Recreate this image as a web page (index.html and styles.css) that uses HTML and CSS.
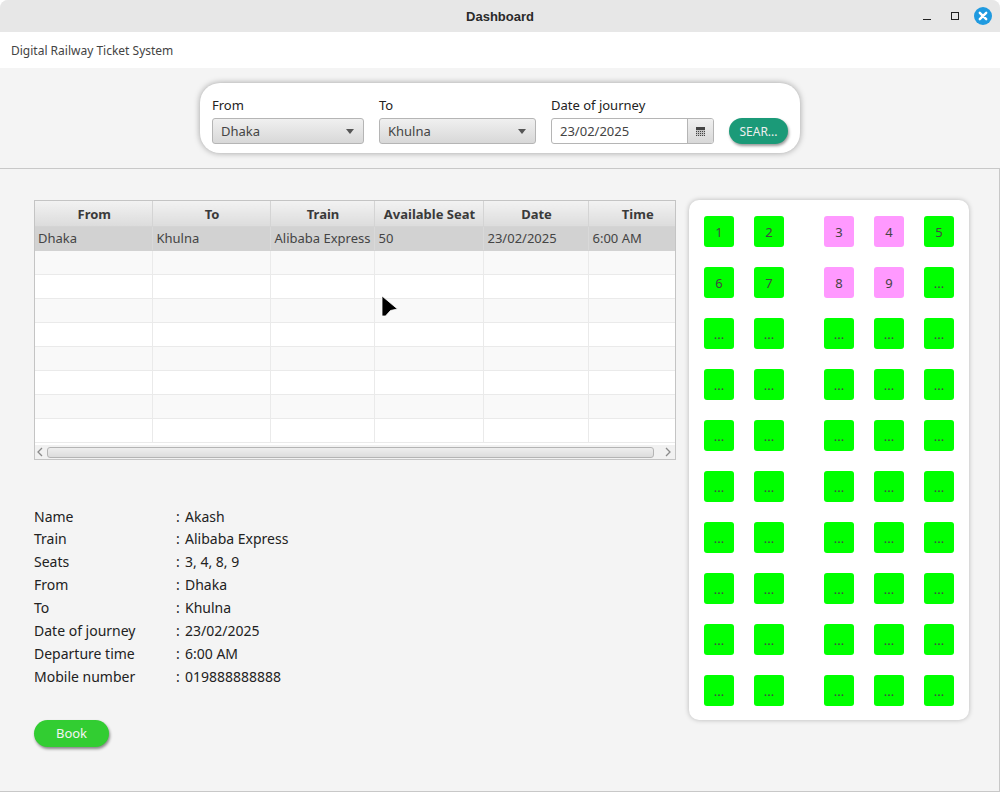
FILE: index.html
```html
<!DOCTYPE html>
<html lang="en">
<head>
  <meta charset="UTF-8" />
  <title>Dashboard</title>
  <link rel="stylesheet" href="styles.css">
</head>
<body>
  <div class="window">
    <div class="titlebar">
      <span class="title">Dashboard</span>
      <div class="win-controls">
        <span class="win-min"></span>
        <span class="win-max"></span>
        <span class="win-close">
          <svg width="18" height="18" viewBox="0 0 18 18"><path d="M5.8 5.8l6.4 6.4M12.2 5.8l-6.4 6.4" stroke="#fff" stroke-width="2.4" stroke-linecap="round"/></svg>
        </span>
      </div>
    </div>

    <div class="menubar">Digital Railway Ticket System</div>

    <div class="search-area">
      <div class="search-card">
        <div class="field from-field">
          <label>From</label>
          <div class="combo"><span>Dhaka</span><i class="arrow"></i></div>
        </div>
        <div class="field to-field">
          <label>To</label>
          <div class="combo"><span>Khulna</span><i class="arrow"></i></div>
        </div>
        <div class="field date-field">
          <label>Date of journey</label>
          <div class="datepicker">
            <span class="date-text">23/02/2025</span>
            <span class="date-btn">
              <svg width="9" height="9" viewBox="0 0 9 9" shape-rendering="crispEdges"><rect width="9" height="9" fill="#444"/><path d="M0 3.5h9M0 5.5h9M0 7.5h9M1.5 3v6M3.5 3v6M5.5 3v6M7.5 3v6" stroke="#c4c4c4" stroke-width="1"/></svg>
            </span>
          </div>
        </div>
        <button class="search-btn">SEAR...</button>
      </div>
    </div>

    <div class="main">
      <div class="left">
        <div class="table-box">
          <table class="trains">
            <colgroup>
              <col class="c-from"><col class="c-to"><col class="c-train"><col class="c-seat"><col class="c-date"><col class="c-time">
            </colgroup>
            <thead>
              <tr><th>From</th><th>To</th><th>Train</th><th>Available Seat</th><th>Date</th><th>Time</th></tr>
            </thead>
            <tbody>
              <tr class="selected"><td>Dhaka</td><td>Khulna</td><td>Alibaba Express</td><td>50</td><td>23/02/2025</td><td>6:00 AM</td></tr>
              <tr class="odd"><td></td><td></td><td></td><td></td><td></td><td></td></tr>
              <tr><td></td><td></td><td></td><td></td><td></td><td></td></tr>
              <tr class="odd"><td></td><td></td><td></td><td></td><td></td><td></td></tr>
              <tr><td></td><td></td><td></td><td></td><td></td><td></td></tr>
              <tr class="odd"><td></td><td></td><td></td><td></td><td></td><td></td></tr>
              <tr><td></td><td></td><td></td><td></td><td></td><td></td></tr>
              <tr class="odd"><td></td><td></td><td></td><td></td><td></td><td></td></tr>
              <tr><td></td><td></td><td></td><td></td><td></td><td></td></tr>
            </tbody>
          </table>
          <div class="hscroll">
            <svg width="8" height="10" viewBox="0 0 8 10"><path d="M6 1L2 5l4 4" fill="none" stroke="#8a8a8a" stroke-width="1.3"/></svg>
            <div class="thumb"></div>
            <svg width="8" height="10" viewBox="0 0 8 10"><path d="M2 1l4 4-4 4" fill="none" stroke="#8a8a8a" stroke-width="1.3"/></svg>
          </div>
        </div>

        <div class="details">
          <span>Name</span><span>:</span><span>Akash</span>
          <span>Train</span><span>:</span><span>Alibaba Express</span>
          <span>Seats</span><span>:</span><span>3, 4, 8, 9</span>
          <span>From</span><span>:</span><span>Dhaka</span>
          <span>To</span><span>:</span><span>Khulna</span>
          <span>Date of journey</span><span>:</span><span>23/02/2025</span>
          <span>Departure time</span><span>:</span><span>6:00 AM</span>
          <span>Mobile number</span><span>:</span><span>019888888888</span>
        </div>

        <button class="book-btn">Book</button>
      </div>

      <div class="seat-card">
        <div class="seat-row"><b class="seat">1</b><b class="seat">2</b><b class="seat aisle booked">3</b><b class="seat booked">4</b><b class="seat">5</b></div>
        <div class="seat-row"><b class="seat">6</b><b class="seat">7</b><b class="seat aisle booked">8</b><b class="seat booked">9</b><b class="seat">...</b></div>
        <div class="seat-row"><b class="seat">...</b><b class="seat">...</b><b class="seat aisle">...</b><b class="seat">...</b><b class="seat">...</b></div>
        <div class="seat-row"><b class="seat">...</b><b class="seat">...</b><b class="seat aisle">...</b><b class="seat">...</b><b class="seat">...</b></div>
        <div class="seat-row"><b class="seat">...</b><b class="seat">...</b><b class="seat aisle">...</b><b class="seat">...</b><b class="seat">...</b></div>
        <div class="seat-row"><b class="seat">...</b><b class="seat">...</b><b class="seat aisle">...</b><b class="seat">...</b><b class="seat">...</b></div>
        <div class="seat-row"><b class="seat">...</b><b class="seat">...</b><b class="seat aisle">...</b><b class="seat">...</b><b class="seat">...</b></div>
        <div class="seat-row"><b class="seat">...</b><b class="seat">...</b><b class="seat aisle">...</b><b class="seat">...</b><b class="seat">...</b></div>
        <div class="seat-row"><b class="seat">...</b><b class="seat">...</b><b class="seat aisle">...</b><b class="seat">...</b><b class="seat">...</b></div>
        <div class="seat-row"><b class="seat">...</b><b class="seat">...</b><b class="seat aisle">...</b><b class="seat">...</b><b class="seat">...</b></div>
      </div>
    </div>

    <!-- mouse pointer caught in the screenshot -->
    <svg class="pointer" width="18" height="24" viewBox="0 0 18 24">
      <path d="M1 1L16.5 14l-7 1.5-5 5.5H1z" fill="#000" stroke="#fff" stroke-width="0.8" stroke-linejoin="round"/>
    </svg>
  </div>
</body>
</html>
```

FILE: styles.css
```css
html, body {
  margin: 0;
  padding: 0;
  background: #fff;
}

body {
  font-family: "Noto Sans", "Open Sans", sans-serif;
  font-size: 13px;
  color: #333;
}

.window {
  position: relative;
  width: 1000px;
  height: 792px;
  overflow: hidden;
  border-radius: 8px 8px 0 0;
  background: #f4f4f4;
  display: flex;
  flex-direction: column;
}

.titlebar {
  position: relative;
  height: 32px;
  flex: none;
  background: #e7e7e7;
  display: flex;
  align-items: center;
  justify-content: center;
}

.title {
  font-family: "Liberation Sans", sans-serif;
  font-weight: bold;
  font-size: 13px;
  color: #2a2a2a;
}

.win-controls {
  position: absolute;
  right: 8px;
  top: 7px;
  display: flex;
  align-items: center;
}

.win-min {
  width: 8px;
  height: 1px;
  margin-top: 6px;
  background: #222;
}

.win-max {
  width: 6px;
  height: 6px;
  margin-left: 20px;
  border: 1px solid #222;
}

.win-close {
  width: 18px;
  height: 18px;
  margin-left: 15px;
  border-radius: 50%;
  background: #1f9ae0;
}

.win-close svg {
  display: block;
}

.menubar {
  height: 36px;
  flex: none;
  box-sizing: border-box;
  padding: 0 11px;
  line-height: 37px;
  background: #fff;
  font-size: 12px;
  color: #444;
}

.search-area {
  height: 100px;
  flex: none;
  display: flex;
  justify-content: center;
  padding-top: 15px;
  box-sizing: border-box;
}

.search-card {
  width: 600px;
  height: 70px;
  box-sizing: border-box;
  padding: 12px 12px 9px;
  background: #fff;
  border-radius: 20px;
  box-shadow: 0 0 6px rgba(0, 0, 0, 0.35);
  display: flex;
  align-items: flex-end;
}

.field {
  display: flex;
  flex-direction: column;
}

.field label {
  font-size: 13px;
  line-height: 20px;
  margin-bottom: 3px;
  color: #222;
}

.from-field { width: 152px; }
.to-field { width: 157px; margin-left: 15px; }
.date-field { width: 163px; margin-left: 15px; }

.combo {
  height: 26px;
  box-sizing: border-box;
  padding: 0 9px 0 8px;
  display: flex;
  align-items: center;
  justify-content: space-between;
  border: 1px solid #b5b5b5;
  border-radius: 3px;
  background: linear-gradient(#f0f0f0, #d8d8d8);
  color: #444;
}

.arrow {
  width: 0;
  height: 0;
  border-left: 4px solid transparent;
  border-right: 4px solid transparent;
  border-top: 5px solid #555;
}

.datepicker {
  height: 26px;
  box-sizing: border-box;
  display: flex;
  border: 1px solid #b5b5b5;
  border-radius: 3px;
  background: #fff;
  overflow: hidden;
}

.date-text {
  flex: 1;
  padding-left: 8px;
  line-height: 24px;
  color: #444;
}

.date-btn {
  width: 25px;
  border-left: 1px solid #b5b5b5;
  background: linear-gradient(#f0f0f0, #d8d8d8);
  display: flex;
  align-items: center;
  justify-content: center;
}

.search-btn {
  width: 59px;
  height: 26px;
  margin-left: 15px;
  padding: 0;
  border: none;
  border-radius: 13px;
  background: #1b9a78;
  color: #eee;
  font: 12px "Noto Sans", sans-serif;
  box-shadow: 1px 2px 3px rgba(0, 0, 0, 0.4);
}

.main {
  flex: 1;
  box-sizing: border-box;
  border-top: 1px solid #c8c8c8;
  border-right: 1px solid #c8c8c8;
  border-bottom: 1px solid #c8c8c8;
  padding: 31px 30px 0 34px;
  display: flex;
  justify-content: space-between;
  align-items: flex-start;
}

.left {
  width: 642px;
}

.table-box {
  height: 260px;
  box-sizing: border-box;
  border: 1px solid #c4c4c4;
  background: #fff;
  overflow: hidden;
  position: relative;
}

.trains {
  width: 650px;
  border-collapse: collapse;
  table-layout: fixed;
}

.c-from { width: 117px; }
.c-to { width: 118px; }
.c-train { width: 104px; }
.c-seat { width: 109px; }
.c-date { width: 105px; }
.c-time { width: 97px; }

.trains th {
  height: 25px;
  box-sizing: border-box;
  padding: 2px 0 0 2px;
  font-size: 13px;
  color: #3a3a3a;
  background: linear-gradient(#f2f2f2, #dcdcdc);
  border-right: 1px solid #d4d4d4;
  border-bottom: 1px solid #d4d4d4;
}

.trains th:last-child,
.trains td:last-child {
  border-right: none;
}

.trains td {
  height: 24px;
  box-sizing: border-box;
  padding: 0 3px 0 4px;
  font-size: 13px;
  white-space: nowrap;
  overflow: hidden;
  color: #444;
  background: #fff;
  border-right: 1px solid #eaeaea;
  border-bottom: 1px solid #eaeaea;
}

.trains td:first-child {
  padding-left: 3px;
}

.trains .odd td {
  background: #f9f9f9;
}

.trains .selected td {
  background: #d2d2d2;
  border-right-color: #d9d9d9;
  border-bottom-color: #d2d2d2;
}

.hscroll {
  position: absolute;
  left: 0;
  right: 0;
  bottom: 0;
  height: 14px;
  box-sizing: border-box;
  padding: 0 3px 0 1px;
  background: #f1f1f1;
  display: flex;
  align-items: center;
  gap: 3px;
}

.thumb {
  flex: 1;
  height: 9px;
  margin-right: 7px;
  border: 1px solid #b4b4b4;
  border-radius: 3px;
  background: linear-gradient(#eeeeee, #dcdcdc);
}

.details {
  margin-top: 44.6px;
  display: grid;
  grid-template-columns: 142px 9px 1fr;
  grid-auto-rows: 22.9px;
  align-items: center;
  font-size: 14px;
  color: #222;
}

.book-btn {
  display: block;
  width: 75px;
  height: 27px;
  margin-top: 32.6px;
  padding: 0 0 2px;
  border: none;
  border-radius: 14px;
  background: #32cd32;
  color: #f4f4f4;
  font: 13px "Noto Sans", sans-serif;
  box-shadow: 1px 2px 3px rgba(0, 0, 0, 0.45);
}

.seat-card {
  width: 280px;
  height: 520px;
  box-sizing: border-box;
  padding: 16px 15px 0;
  background: #fff;
  border-radius: 10px;
  box-shadow: 0 0 5px rgba(0, 0, 0, 0.25);
  display: flex;
  flex-direction: column;
  gap: 20px;
}

.seat-row {
  display: flex;
  gap: 20px;
}

.seat {
  width: 30px;
  height: 31px;
  border-radius: 3px;
  background: #00ff00;
  font-weight: normal;
  font-size: 13px;
  color: #444;
  display: flex;
  align-items: center;
  justify-content: center;
}

.seat.aisle {
  margin-left: 20px;
}

.seat.booked {
  background: #ff99ff;
}

.pointer {
  position: absolute;
  left: 381px;
  top: 295px;
}
```
